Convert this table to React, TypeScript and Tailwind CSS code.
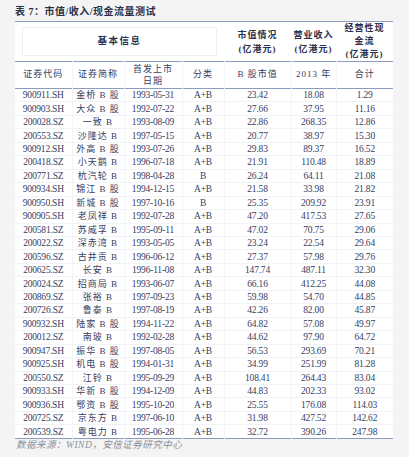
import React from "react";

const rows: string[][] = [
  ["900911.SH", "金桥 B 股", "1993-05-31", "A+B", "23.42", "18.08", "1.29"],
  ["900903.SH", "大众 B 股", "1992-07-22", "A+B", "27.66", "37.95", "11.16"],
  ["200028.SZ", "一致 B", "1993-08-09", "A+B", "22.86", "268.35", "12.86"],
  ["200553.SZ", "沙隆达 B", "1997-05-15", "A+B", "20.77", "38.97", "15.30"],
  ["900912.SH", "外高 B 股", "1993-07-26", "A+B", "29.83", "89.37", "16.52"],
  ["200418.SZ", "小天鹅 B", "1996-07-18", "A+B", "21.91", "110.48", "18.89"],
  ["200771.SZ", "杭汽轮 B", "1998-04-28", "B", "26.24", "64.11", "21.08"],
  ["900934.SH", "锦江 B 股", "1994-12-15", "A+B", "21.58", "33.98", "21.82"],
  ["900950.SH", "新城 B 股", "1997-10-16", "B", "25.35", "209.92", "23.91"],
  ["900905.SH", "老凤祥 B", "1992-07-28", "A+B", "47.20", "417.53", "27.65"],
  ["200581.SZ", "苏威孚 B", "1995-09-11", "A+B", "47.02", "70.75", "29.06"],
  ["200022.SZ", "深赤湾 B", "1993-05-05", "A+B", "23.24", "22.54", "29.64"],
  ["200596.SZ", "古井贡 B", "1996-06-12", "A+B", "27.37", "57.98", "29.76"],
  ["200625.SZ", "长安 B", "1996-11-08", "A+B", "147.74", "487.11", "32.30"],
  ["200024.SZ", "招商局 B", "1993-06-07", "A+B", "66.16", "412.25", "44.08"],
  ["200869.SZ", "张裕 B", "1997-09-23", "A+B", "59.98", "54.70", "44.85"],
  ["200726.SZ", "鲁泰 B", "1997-08-19", "A+B", "42.26", "82.00", "45.87"],
  ["900932.SH", "陆家 B 股", "1994-11-22", "A+B", "64.82", "57.08", "49.97"],
  ["200012.SZ", "南玻 B", "1992-02-28", "A+B", "44.62", "97.90", "64.72"],
  ["900947.SH", "振华 B 股", "1997-08-05", "A+B", "56.53", "293.69", "70.21"],
  ["900925.SH", "机电 B 股", "1994-01-31", "A+B", "34.99", "251.99", "81.28"],
  ["200550.SZ", "江铃 B", "1995-09-29", "A+B", "108.41", "264.43", "83.04"],
  ["900933.SH", "华新 B 股", "1994-12-09", "A+B", "44.83", "202.33", "93.02"],
  ["900936.SH", "鄂资 B 股", "1995-10-20", "A+B", "25.55", "176.08", "114.03"],
  ["200725.SZ", "京东方 B", "1997-06-10", "A+B", "31.98", "427.52", "142.62"],
  ["200539.SZ", "粤电力 B", "1995-06-28", "A+B", "32.72", "390.26", "247.98"],
];

const widths = [57, 52, 58, 42, 67, 45, 57];

const font = {
  fontFamily: '"Liberation Serif", "Noto Sans CJK SC", serif',
};

export default function App() {
  return (
    <div
      className="w-[409px] h-[457px] bg-[#f4f4f5] overflow-hidden text-[#36405f]"
      style={font}
    >
      <div className="pl-[15px] pt-[5px] h-[21px] text-[10px] leading-[14px] font-bold text-[#2a2f45] tracking-[0.5px]">
        表 7：市值/收入/现金流量测试
      </div>
      <div className="ml-[15px] w-[378px] bg-white border-t border-[#8c9cbf]">
        <table className="border-collapse table-fixed w-[378px]">
          <colgroup>
            {widths.map((w, i) => (
              <col key={i} style={{ width: w }} />
            ))}
          </colgroup>
          <thead>
            <tr className="h-[39px] border-b border-[#8c9cbf]">
              <th colSpan={4} className="p-0 align-middle">
                <div className="mx-[7px] h-[29px] border border-[#eef0f4] flex items-center justify-center text-[9.5px] font-bold tracking-[1.5px] text-[#2a3150]">
                  基本信息
                </div>
              </th>
              <th className="p-0 text-[9px] leading-[14px] font-bold tracking-[1px] text-[#2a3150]">
                市值情况
                <br />
                (亿港元)
              </th>
              <th className="p-0 text-[9px] leading-[14px] font-bold tracking-[1px] text-[#2a3150]">
                营业收入
                <br />
                (亿港元)
              </th>
              <th className="p-0 text-[9px] leading-[13px] font-bold tracking-[1px] text-[#2a3150]">
                经营性现
                <br />
                金流
                <br />
                (亿港元)
              </th>
            </tr>
            <tr className="h-[27px] border-b border-[#8c9cbf] text-[9px] font-normal tracking-[1px]">
              <th className="p-0 font-normal border-r border-[#f2f4f7]">证券代码</th>
              <th className="p-0 font-normal border-r border-[#f2f4f7]">证券简称</th>
              <th className="p-0 font-normal leading-[12px] border-r border-[#f2f4f7]">
                首发上市
                <br />
                日期
              </th>
              <th className="p-0 font-normal border-r border-[#f2f4f7]">分类</th>
              <th className="p-0 font-normal border-r border-[#f2f4f7]">B 股市值</th>
              <th className="p-0 font-normal border-r border-[#f2f4f7]">2013 年</th>
              <th className="p-0 font-normal">合计</th>
            </tr>
          </thead>
          <tbody>
            {rows.map((r, i) => (
              <tr
                key={i}
                className={
                  "h-[13.46px] text-[9.5px] leading-[12px] " +
                  (i === rows.length - 1
                    ? "border-b border-[#8c9cbf]"
                    : "border-b border-[#f1f3f6]")
                }
              >
                {r.map((c, j) => (
                  <td
                    key={j}
                    className={
                      "p-0 text-center whitespace-nowrap " +
                      (j === 1 ? "tracking-[1px] text-[9px] " : "tracking-[-0.2px] ") +
                      (j < 6 ? "border-r border-[#f2f4f7]" : "")
                    }
                  >
                    {c}
                  </td>
                ))}
              </tr>
            ))}
          </tbody>
        </table>
      </div>
      <div className="pl-[16px] pt-0 text-[9.5px] leading-[13px] italic text-[#8a8f9c] tracking-[0.5px]">
        数据来源：WIND，安信证券研究中心
      </div>
    </div>
  );
}
